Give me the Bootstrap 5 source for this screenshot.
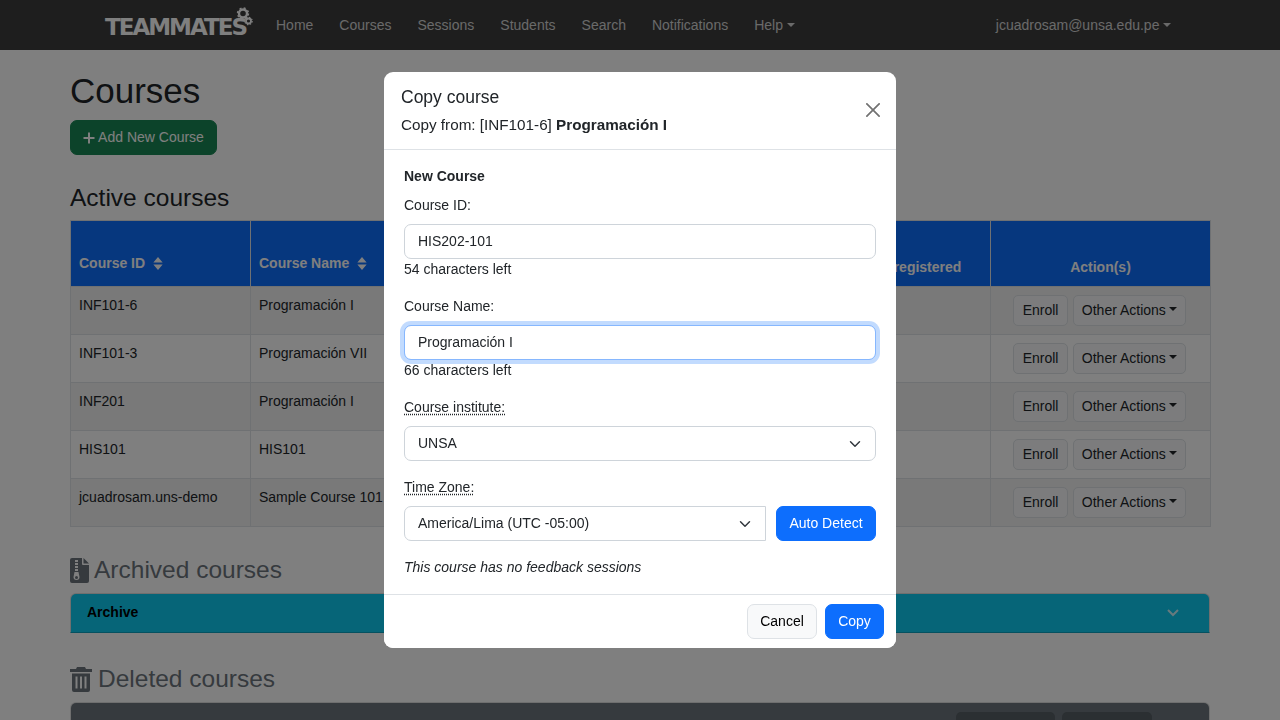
<!DOCTYPE html>
<html lang="en">
<head>
<meta charset="utf-8">
<title>TEAMMATES - Courses</title>
<link href="https://cdn.jsdelivr.net/npm/bootstrap@5.3.0/dist/css/bootstrap.min.css" rel="stylesheet">
<style>
html,body{height:720px;overflow:hidden}
body{font-family:"Liberation Sans",Arial,sans-serif;font-size:14px;line-height:21px;color:#212529;background:#fff}
.tm-nav{height:50px;background:#3d3d3d;padding:0}
.tm-nav-inner{width:1280px;padding:0 109px 0 105px}
.tm-brand{position:relative;font-family:"DejaVu Sans",sans-serif;font-size:23px;font-weight:700;letter-spacing:-2px;color:#fff;width:171px;line-height:55px;height:50px;flex:none}
.tm-gears{position:absolute;left:126px;top:7px;width:22px;height:22px}
.tm-link{color:rgba(255,255,255,.78);padding:0;margin-right:26px;font-size:14px;white-space:nowrap}
.tm-link.dropdown-toggle::after{vertical-align:.2em}
.tm-user{margin:0}
.tm-page{width:1140px;margin:0 auto}
.tm-h1{font-size:35px;line-height:42px;margin:20px 0 8px;font-weight:400}
.tm-add{height:35px;width:147px;font-size:14px;padding:0;border-radius:7px;display:flex;align-items:center;justify-content:center;gap:3px}
.tm-h2{font-size:24.5px;line-height:30px;font-weight:400;margin:0}
.tm-active{margin-top:28px;margin-bottom:7px}
.tm-table{table-layout:fixed;width:1140px;margin:0;border-color:#dee2e6;font-size:14px}
.tm-table th{background:#0d6efd;color:#fff;height:66px;font-weight:700;vertical-align:bottom;padding:8px;box-shadow:none;border-color:#dee2e6}
.tm-table th.tm-sort{padding-bottom:12px}
.tm-table td{height:48px;padding:8px 8px 0;vertical-align:top;line-height:21px}
.tm-table td.tm-actions{padding-right:10px}
.tm-sorticon{display:inline-block;width:10px;height:13px;margin-left:4px;vertical-align:-2px}
.tm-rowbtn{font-size:14px;height:31px;padding:0 8px;line-height:29px;background:#f8f9fa;border:1px solid #dee2e6;border-radius:5px;color:#212529}
.tm-enroll{padding:0 8.5px}
.tm-rowbtn.dropdown-toggle::after{margin-left:3px}
.tm-rowbtn+.tm-rowbtn{margin-left:1px}
.tm-sec{color:#6c757d;display:flex;align-items:center}
.tm-sec svg{flex:none}
.tm-archive-h{margin-top:28px;margin-bottom:8px;gap:5px}
.tm-bar{height:40px;display:flex;align-items:center;justify-content:space-between;padding:0 30px 0 16px;border:1px solid rgba(0,0,0,.125);border-radius:6px 6px 0 0;background-clip:padding-box}
.tm-bar-info{background-color:#0dcaf0;border-bottom-color:#0aa2c0;font-weight:700;color:#000}
.tm-bar-label{margin-top:-2px}
.tm-deleted-h{margin-top:31px;margin-bottom:8px;gap:6px}
.tm-bar-dark{background-color:#6c757d;height:60px;align-items:flex-start;padding:9px 57px 0 0;justify-content:flex-end;gap:7px}
.tm-pill{background:#565e64;color:#fff;border-radius:5px;padding:14px 10px 0;height:35px;text-align:center;display:block}
.tm-w1{width:99px}.tm-w2{width:90px}
.tm-dialog{width:512px;max-width:512px;margin:72px auto 0}
.tm-content{border:0;border-radius:9px;height:576px}
.tm-head{padding:14px 17px 15px;height:78px;align-items:center;border-bottom:1px solid #dee2e6}
.tm-title{font-size:17.5px;line-height:22px;font-weight:400;margin:0 0 6px}
.tm-from{font-size:15.25px;line-height:21px}
.tm-x{margin:0 -4px 0 0;flex:none;width:12px;height:12px;padding:4px;box-sizing:content-box;opacity:.55}
.tm-body{padding:16px 20px 0;height:444px;flex:none}
.tm-newc{font-weight:700;line-height:21px}
.tm-label{display:block;margin:8px 0;line-height:21px}
.tm-control{height:35px;font-size:14px;padding:0 13px;line-height:33px;border-color:#ced4da;border-radius:7px;color:#212529}
input.tm-control{padding-bottom:2px}
.tm-focus,.tm-focus:focus{border-color:#86b7fe;box-shadow:0 0 0 4px rgba(13,110,253,.25);outline:0}
.tm-note{line-height:21px;margin-bottom:16px}
.tm-dot{text-decoration:underline dotted #212529;text-underline-offset:2px}
.tm-field{margin-bottom:16px}
.tm-row{display:flex;gap:10px}
.tm-tz{border-radius:7px 0 0 7px}
.tm-auto{height:35px;width:100px;flex:none;font-size:14px;padding:0;border-radius:7px}
.tm-ital{font-style:italic;margin-top:16px;line-height:21px}
.tm-foot{height:54px;flex:none;border-top:1px solid #dee2e6;padding:0 12px 0 0;display:flex;justify-content:flex-end;align-items:center;gap:8px;background:#fff;border-radius:0 0 9px 9px}
.tm-foot .btn{height:35px;font-size:14px;padding:0;border-radius:7px}
.tm-cancel{width:70px;background:#f8f9fa;border-color:#dee2e6}
.tm-copy{width:59px}
</style>
</head>
<body>
<nav class="navbar tm-nav">
  <div class="d-flex align-items-center tm-nav-inner">
    <a class="text-decoration-none tm-brand" href="#">TEAMMATES
      <svg class="tm-gears" viewBox="0 0 22 22" aria-hidden="true">
        <circle cx="12" cy="6.5" r="4" fill="none" stroke="#fff" stroke-width="2.4"/>
        <circle cx="12" cy="6.5" r="5.4" fill="none" stroke="#fff" stroke-width="1.6" stroke-dasharray="2 2.25"/>
        <circle cx="17.5" cy="14" r="2.5" fill="none" stroke="#fff" stroke-width="1.8"/>
        <circle cx="17.5" cy="14" r="3.7" fill="none" stroke="#fff" stroke-width="1.2" stroke-dasharray="1.5 1.4"/>
      </svg>
    </a>
    <div class="d-flex align-items-center flex-grow-1">
      <a class="nav-link tm-link" href="#">Home</a>
      <a class="nav-link tm-link" href="#">Courses</a>
      <a class="nav-link tm-link" href="#">Sessions</a>
      <a class="nav-link tm-link" href="#">Students</a>
      <a class="nav-link tm-link" href="#">Search</a>
      <a class="nav-link tm-link" href="#">Notifications</a>
      <a class="nav-link tm-link dropdown-toggle" href="#">Help</a>
      <a class="nav-link tm-link tm-user dropdown-toggle ms-auto" href="#">jcuadrosam@unsa.edu.pe</a>
    </div>
  </div>
</nav>

<main class="tm-page">
  <h1 class="tm-h1">Courses</h1>
  <button class="btn btn-success tm-add" type="button">
    <svg width="12" height="12" viewBox="0 0 12 12" aria-hidden="true"><path d="M6 .5v11M.5 6h11" stroke="#fff" stroke-width="2" fill="none"/></svg>
    Add New Course
  </button>
  <h2 class="tm-h2 tm-active">Active courses</h2>
  <table class="table table-bordered table-striped tm-table">
    <colgroup><col style="width:180px"><col style="width:220px"><col style="width:130px"><col style="width:130px"><col style="width:136px"><col style="width:124px"><col style="width:220px"></colgroup>
    <thead>
      <tr>
        <th class="tm-sort">Course ID <svg class="tm-sorticon" viewBox="0 0 10 14"><path d="M5 0l5 6H0zM5 14L0 8h10z" fill="#fff"/></svg></th>
        <th class="tm-sort">Course Name <svg class="tm-sorticon" viewBox="0 0 10 14"><path d="M5 0l5 6H0zM5 14L0 8h10z" fill="#fff"/></svg></th>
        <th>Creation Date</th>
        <th>Enrolled</th>
        <th>Total</th>
        <th>Unregistered</th>
        <th class="text-center">Action(s)</th>
      </tr>
    </thead>
    <tbody>
      <tr><td>INF101-6</td><td>Programación I</td><td>2023</td><td>0</td><td>0</td><td>0</td><td class="text-center tm-actions"><button class="tm-rowbtn tm-enroll" type="button">Enroll</button> <button class="tm-rowbtn dropdown-toggle" type="button">Other Actions</button></td></tr>
      <tr><td>INF101-3</td><td>Programación VII</td><td>2023</td><td>0</td><td>0</td><td>0</td><td class="text-center tm-actions"><button class="tm-rowbtn tm-enroll" type="button">Enroll</button> <button class="tm-rowbtn dropdown-toggle" type="button">Other Actions</button></td></tr>
      <tr><td>INF201</td><td>Programación I</td><td>2023</td><td>0</td><td>0</td><td>0</td><td class="text-center tm-actions"><button class="tm-rowbtn tm-enroll" type="button">Enroll</button> <button class="tm-rowbtn dropdown-toggle" type="button">Other Actions</button></td></tr>
      <tr><td>HIS101</td><td>HIS101</td><td>2023</td><td>0</td><td>0</td><td>0</td><td class="text-center tm-actions"><button class="tm-rowbtn tm-enroll" type="button">Enroll</button> <button class="tm-rowbtn dropdown-toggle" type="button">Other Actions</button></td></tr>
      <tr><td>jcuadrosam.uns-demo</td><td>Sample Course 101</td><td>2023</td><td>0</td><td>0</td><td>0</td><td class="text-center tm-actions"><button class="tm-rowbtn tm-enroll" type="button">Enroll</button> <button class="tm-rowbtn dropdown-toggle" type="button">Other Actions</button></td></tr>
    </tbody>
  </table>

  <h2 class="tm-h2 tm-sec tm-archive-h">
    <svg width="19" height="25" viewBox="0 0 19 25" aria-hidden="true"><path fill-rule="evenodd" d="M2 0h10v6a1 1 0 0 0 1 1h6v16a2 2 0 0 1-2 2H2a2 2 0 0 1-2-2V2a2 2 0 0 1 2-2zM5 2v2h3V2zM5 5v2h3V5zM5 8v2h3V8zM5 11v2h3v-2zM4.500 14l-1 5a3 3 0 1 0 6 0l-1-5zM6.500 18a1.500 1.500 0 1 1 0 3 1.500 1.500 0 0 1 0-3z" fill="#6c757d"/><path d="M13.500 0l5.500 5.500h-5.500z" fill="#6c757d"/></svg>
    Archived courses
  </h2>
  <div class="tm-bar tm-bar-info">
    <span class="tm-bar-label">Archive</span>
    <svg width="12" height="8" viewBox="0 0 12 8" aria-hidden="true"><path d="M1 1l5 5 5-5" fill="none" stroke="#fff" stroke-opacity=".8" stroke-width="2"/></svg>
  </div>

  <h2 class="tm-h2 tm-sec tm-deleted-h">
    <svg width="22" height="25" viewBox="0 0 22 25" aria-hidden="true"><path fill-rule="evenodd" d="M7 0h8l1 2h6v3H0V2h6zM2 6.500h18V23a2 2 0 0 1-2 2H4a2 2 0 0 1-2-2zM5.500 9.500v12h2v-12zM10 9.500v12h2v-12zM14.500 9.500v12h2v-12z" fill="#6c757d"/></svg>
    Deleted courses
  </h2>
  <div class="tm-bar tm-bar-dark">
    <div class="tm-pill tm-w1"><span>Restore All</span></div>
    <div class="tm-pill tm-w2"><span>Delete All</span></div>
  </div>
</main>

<div class="modal-backdrop show"></div>
<div class="modal d-block" tabindex="-1" role="dialog" aria-modal="true">
  <div class="modal-dialog tm-dialog">
    <div class="modal-content tm-content">
      <div class="d-flex justify-content-between tm-head">
        <div>
          <h5 class="tm-title">Copy course</h5>
          <div class="tm-from">Copy from: [INF101-6] <strong>Programación I</strong></div>
        </div>
        <button type="button" class="btn-close tm-x" aria-label="Close"></button>
      </div>
      <div class="tm-body">
        <div class="tm-newc">New Course</div>
        <label class="tm-label">Course ID:</label>
        <input class="form-control tm-control" type="text" value="HIS202-101">
        <div class="tm-note">54 characters left</div>
        <label class="tm-label">Course Name:</label>
        <input class="form-control tm-control tm-focus" type="text" value="Programación I">
        <div class="tm-note">66 characters left</div>
        <div class="tm-field">
          <label class="tm-label"><span class="tm-dot">Course institute:</span></label>
          <select class="form-select tm-control"><option>UNSA</option></select>
        </div>
        <div>
          <label class="tm-label"><span class="tm-dot">Time Zone:</span></label>
          <div class="tm-row">
            <select class="form-select tm-control tm-tz"><option>America/Lima (UTC -05:00)</option></select>
            <button class="btn btn-primary tm-auto" type="button">Auto Detect</button>
          </div>
        </div>
        <div class="tm-ital">This course has no feedback sessions</div>
      </div>
      <div class="tm-foot">
        <button class="btn btn-light tm-cancel" type="button">Cancel</button>
        <button class="btn btn-primary tm-copy" type="button">Copy</button>
      </div>
    </div>
  </div>
</div>
<script src="https://cdn.jsdelivr.net/npm/bootstrap@5.3.0/dist/js/bootstrap.bundle.min.js"></script>
</body>
</html>
